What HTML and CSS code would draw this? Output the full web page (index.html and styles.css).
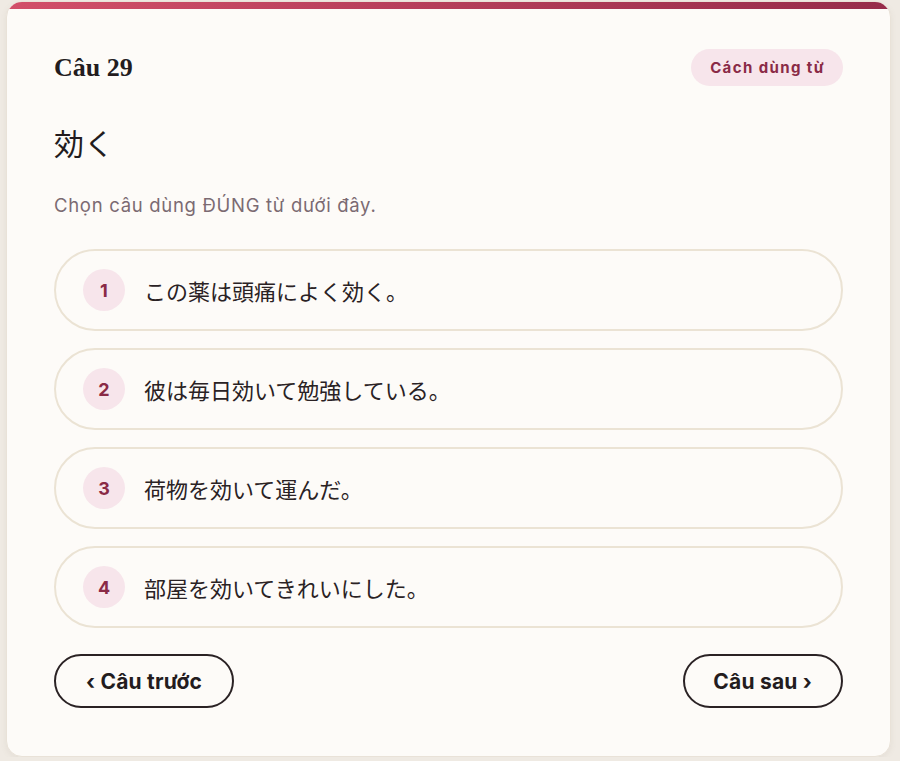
FILE: index.html
```html
<!DOCTYPE html>
<html lang="vi">
<head>
<meta charset="utf-8">
<title>Câu 29</title>
<link rel="stylesheet" href="styles.css">
</head>
<body>
<div class="page">
  <div class="card">
    <div class="topbar"></div>
    <div class="content">
      <div class="header">
        <h2 class="qnum">Câu 29</h2>
        <span class="badge">Cách dùng từ</span>
      </div>
      <h1 class="word">効く</h1>
      <p class="prompt">Chọn câu dùng ĐÚNG từ dưới đây.</p>
      <ul class="options">
        <li class="option"><span class="num">1</span><span class="text">この薬は頭痛によく効く。</span></li>
        <li class="option"><span class="num">2</span><span class="text">彼は毎日効いて勉強している。</span></li>
        <li class="option"><span class="num">3</span><span class="text">荷物を効いて運んだ。</span></li>
        <li class="option"><span class="num">4</span><span class="text">部屋を効いてきれいにした。</span></li>
      </ul>
      <div class="nav">
        <button class="navbtn">‹ Câu trước</button>
        <button class="navbtn next">Câu sau ›</button>
      </div>
    </div>
  </div>
</div>
</body>
</html>
```

FILE: styles.css
```css
* { box-sizing: border-box; }
html, body { margin: 0; padding: 0; }
body {
  background: #efeae3;
  font-family: "Inter", "Noto Sans CJK JP", sans-serif;
  color: #2a2224;
}
.page {
  padding: 1px 9px 0 6px;
}
.card {
  background: #fdfbf8;
  border: 1px solid #e9e2d8;
  border-radius: 16px;
  overflow: hidden;
  height: 756px;
  box-shadow: 0 2px 6px rgba(120, 100, 80, 0.08);
}
.topbar {
  height: 8px;
  background: linear-gradient(90deg, #d24f69, #962c4a);
  margin: -1px -1px 0 -1px;
}
.content {
  padding: 40px 47px 47px 47px;
}
.header {
  display: flex;
  justify-content: space-between;
  align-items: center;
  height: 37px;
}
.qnum {
  margin: 0;
  font-family: "Liberation Serif", "DejaVu Serif", serif;
  font-weight: 700;
  font-size: 26px;
  color: #231c1e;
}
.badge {
  display: inline-flex;
  align-items: center;
  height: 37px;
  padding: 0 18px 0 19px;
  border-radius: 19px;
  background: #f7e5eb;
  color: #8a2a46;
  font-weight: 700;
  font-size: 15px;
  letter-spacing: 1.4px;
}
.word {
  margin: 36px 0 0 0;
  font-family: "Noto Sans CJK JP", sans-serif;
  font-weight: 400;
  font-size: 30px;
  line-height: 40px;
  color: #231c1e;
}
.prompt {
  margin: 30px 0 0 0;
  font-size: 18.5px;
  line-height: 26px;
  letter-spacing: 0.7px;
  color: #7b6a72;
}
.options {
  list-style: none;
  margin: 31px 0 0 0;
  padding: 0;
  display: flex;
  flex-direction: column;
  gap: 17px;
}
.option {
  display: flex;
  align-items: center;
  height: 82px;
  border: 2px solid #ebe3d4;
  border-radius: 41px;
  padding: 0 27px;
  gap: 19px;
}
.num {
  flex: none;
  width: 42px;
  height: 42px;
  border-radius: 50%;
  background: #f7e5eb;
  color: #8a2a46;
  display: flex;
  align-items: center;
  justify-content: center;
  font-weight: 700;
  font-size: 18px;
}
.text {
  font-family: "Noto Sans CJK JP", sans-serif;
  font-size: 22px;
  color: #2a2224;
}
.nav {
  margin-top: 26px;
  display: flex;
  justify-content: space-between;
}
.navbtn {
  height: 54px;
  padding: 0 30px;
  border: 2px solid #2a2224;
  border-radius: 27px;
  background: transparent;
  font-family: "Inter", sans-serif;
  font-weight: 700;
  font-size: 21px;
  letter-spacing: 0.2px;
  color: #231c1e;
}
.navbtn.next {
  padding: 0 29px 0 28px;
}
```
